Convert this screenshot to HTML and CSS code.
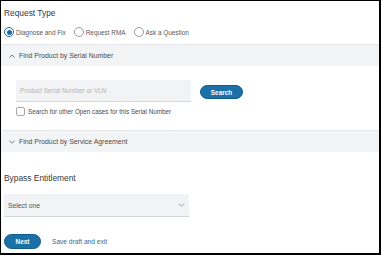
FILE: index.html
```html
<!DOCTYPE html>
<html>
<head>
<meta charset="utf-8">
<link rel="stylesheet" href="styles.css">
</head>
<body>
<div class="frame">
  <h2 class="title first">Request Type</h2>
  <div class="radios">
    <label class="radio"><span class="dot on"></span>Diagnose and Fix</label>
    <label class="radio"><span class="dot"></span>Request RMA</label>
    <label class="radio"><span class="dot"></span>Ask a Question</label>
  </div>
  <div class="acc-head open">
    <svg class="caret" width="6" height="4" viewBox="0 0 6 4"><path d="M0.5 3.5 L3 1 L5.5 3.5" fill="none" stroke="#6b6b6b" stroke-width="0.9"/></svg>
    <span>Find Product by Serial Number</span>
  </div>
  <div class="acc-body">
    <div class="search-row">
      <div class="input">Product Serial Number or VLN</div>
      <button class="btn search">Search</button>
    </div>
    <label class="check"><span class="box"></span>Search for other Open cases for this Serial Number</label>
  </div>
  <div class="acc-head closed">
    <svg class="caret" width="6" height="4" viewBox="0 0 6 4"><path d="M0.5 0.8 L3 3.2 L5.5 0.8" fill="none" stroke="#6b6b6b" stroke-width="0.9"/></svg>
    <span>Find Product by Service Agreement</span>
  </div>
  <h2 class="title second">Bypass Entitlement</h2>
  <div class="select">
    <span>Select one</span>
    <svg width="7" height="4" viewBox="0 0 7 4"><path d="M0.8 0.8 L3.5 3.2 L6.2 0.8" fill="none" stroke="#9a9a9a" stroke-width="0.9"/></svg>
  </div>
  <div class="actions">
    <button class="btn next">Next</button>
    <a class="link" href="#">Save draft and exit</a>
  </div>
</div>
</body>
</html>
```

FILE: styles.css
```css
* { box-sizing: border-box; }
html, body { margin: 0; padding: 0; background: #fff; }
body { font-family: "Liberation Sans", Arial, sans-serif; color: #3a3a3c; }
.frame {
  width: 381px;
  height: 255px;
  border-left: 1px solid #000;
  border-top: 1px solid #000;
  border-right: 2px solid #000;
  border-bottom: 2px solid #000;
  overflow: hidden;
}
.title {
  margin: 0;
  font-weight: normal;
  font-size: 8.4px;
  line-height: 10px;
  color: #39393b;
  padding-left: 3px;
}
.title.first { margin-top: 7px; }
.title.second { margin-top: 21px; }
.radios {
  display: flex;
  align-items: center;
  gap: 8px;
  padding-left: 3px;
  margin-top: 8px;
  height: 12px;
}
.radio {
  display: flex;
  align-items: center;
  font-size: 6.4px;
  color: #58585b;
  gap: 2px;
}
.dot {
  width: 10px;
  height: 10px;
  border-radius: 50%;
  border: 1px solid #9b9b9b;
  background: #fff;
  display: inline-block;
  position: relative;
}
.dot.on { border-color: #1b6aa0; }
.dot.on::after {
  content: "";
  position: absolute;
  left: 1.5px; top: 1.5px;
  width: 5px; height: 5px;
  border-radius: 50%;
  background: #1b6aa0;
}
.acc-head {
  display: flex;
  align-items: center;
  height: 22px;
  background: #f3f4f5;
  border-top: 1px solid #e6e7e8;
  font-size: 6.9px;
  color: #4a4a4c;
  padding-left: 8px;
  gap: 4px;
}
.acc-head.open { margin-top: 6px; }
.acc-body {
  padding: 14px 0 14px 15px;
  background: #fff;
}
.search-row {
  display: flex;
  align-items: center;
  gap: 9px;
}
.input {
  width: 175px;
  height: 22px;
  background: #f2f3f4;
  border-bottom: 1px solid #d6d7d8;
  font-size: 6.4px;
  color: #b4b5b7;
  padding-left: 4px;
  display: flex;
  align-items: center;
}
.btn {
  font-family: "Liberation Sans", Arial, sans-serif;
  background: #1b70a6;
  color: #fff;
  border: 1px solid #135d8d;
  border-radius: 8px;
  font-weight: bold;
  font-size: 6.4px;
  padding: 0;
  height: 14px;
  cursor: pointer;
  margin-top: 2px;
}
.search { width: 43px; }
.check {
  display: flex;
  align-items: center;
  gap: 3px;
  margin-top: 5px;
  font-size: 6.3px;
  color: #4a4a4c;
}
.box {
  width: 9px;
  height: 9px;
  border: 1px solid #a8a8a8;
  border-radius: 2px;
  background: #fff;
  display: inline-block;
}
.select {
  margin: 11px 0 0 3px;
  width: 185px;
  height: 23px;
  background: #f2f3f4;
  border-bottom: 1px solid #d4d5d6;
  display: flex;
  align-items: center;
  justify-content: space-between;
  padding: 0 4px 0 4px;
  font-size: 6.8px;
  color: #555;
}
.actions {
  display: flex;
  align-items: center;
  gap: 11px;
  margin: 17px 0 0 3px;
}
.next { width: 37px; height: 15px; margin-top: 0; }
.link {
  color: #2a6ba3;
  text-decoration: none;
  font-size: 6.6px;
}
```
